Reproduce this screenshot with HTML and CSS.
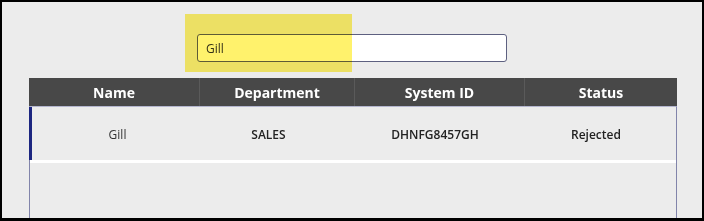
FILE: index.html
```html
<!DOCTYPE html>
<html lang="en">
<head>
    <meta charset="UTF-8">
    <meta name="viewport" content="width=device-width, initial-scale=1.0">
    <title>Employee Search</title>
    <link rel="stylesheet" href="styles.css">
</head>
<body>
    <div class="frame">
        <!-- search box -->
        <div class="search">
            <input type="text" class="search-input" value="Gill">
        </div>

        <!-- results -->
        <div class="table">
            <div class="thead">
                <div class="th">Name</div>
                <div class="th">Department</div>
                <div class="th">System ID</div>
                <div class="th">Status</div>
            </div>
            <div class="tbody">
                <div class="row selected">
                    <div class="td name">Gill</div>
                    <div class="td">SALES</div>
                    <div class="td">DHNFG8457GH</div>
                    <div class="td">Rejected</div>
                </div>
                <div class="row-gap"></div>
            </div>
        </div>

        <!-- highlighter mark -->
        <div class="highlight"></div>
    </div>
</body>
</html>
```

FILE: styles.css
```css
* {
    box-sizing: border-box;
}
body {
    margin: 0;
    font-family: "Open Sans", "Liberation Sans", sans-serif;
    background: #000;
}
.frame {
    position: relative;
    width: 704px;
    height: 221px;
    border: 2px solid #000;
    border-bottom-width: 3px;
    background-color: #ececec;
    overflow: hidden;
}
.search {
    padding: 32px 0 0 195px;
}
.search-input {
    display: block;
    width: 310px;
    height: 28px;
    margin: 0;
    padding: 0 8px;
    border: 1px solid #5d6080;
    border-radius: 3px;
    background: #fff;
    font-family: inherit;
    font-size: 12px;
    color: #333;
    outline: none;
}
.table {
    margin: 16px 0 0 27px;
    width: 648px;
}
.thead {
    display: grid;
    grid-template-columns: 170px 155px 170px 153px;
    height: 28px;
    background-color: #484848;
}
.th {
    display: flex;
    align-items: center;
    justify-content: center;
    color: #fff;
    font-size: 14px;
    font-weight: 700;
    border-left: 1px solid #5a5a5a;
}
.th:first-child {
    border-left: none;
}
.tbody {
    height: 120px;
    border-top: 1px solid #b4b6cf;
    border-left: 1px solid #8184aa;
    border-right: 1px solid #8184aa;
}
.row {
    display: grid;
    grid-template-columns: 171px 131px 202px 120px;
    height: 53px;
    padding-top: 1px;
    font-size: 12px;
    font-weight: 600;
    color: #222;
}
.row.selected {
    margin-left: -1px;
    border-left: 3px solid #1c2680;
}
.td {
    display: flex;
    align-items: center;
    justify-content: center;
}
.td.name {
    font-weight: 400;
    color: #333;
}
.row-gap {
    height: 3px;
    background: #fff;
}
.highlight {
    position: absolute;
    left: 183px;
    top: 12px;
    width: 167px;
    height: 58px;
    background-color: #fff26c;
    mix-blend-mode: multiply;
}
```
